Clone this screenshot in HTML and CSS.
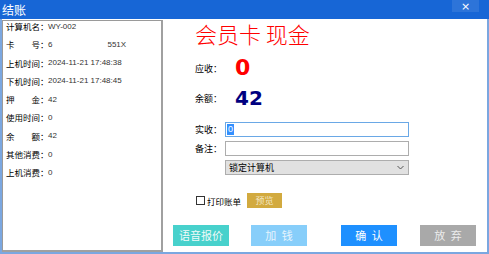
FILE: index.html
```html
<!DOCTYPE html>
<html lang="zh-CN">
<head>
    <meta charset="UTF-8">
    <title>结账</title>
    <link rel="stylesheet" href="styles.css">
</head>
<body>
<div class="window">
    <div class="titlebar">
        <span class="title">结账</span>
        <span class="close">×</span>
    </div>
    <div class="content">
        <div class="info">
            <div class="info-row"><span class="info-label">计算机名：</span><span class="info-value">WY-002</span></div>
            <div class="info-row"><span class="info-label">卡　　号：</span><span class="info-value">6</span><span class="info-value card-tail">551X</span></div>
            <div class="info-row"><span class="info-label">上机时间：</span><span class="info-value">2024-11-21 17:48:38</span></div>
            <div class="info-row"><span class="info-label">下机时间：</span><span class="info-value">2024-11-21 17:48:45</span></div>
            <div class="info-row"><span class="info-label">押　　金：</span><span class="info-value">42</span></div>
            <div class="info-row"><span class="info-label">使用时间：</span><span class="info-value">0</span></div>
            <div class="info-row"><span class="info-label">余　　额：</span><span class="info-value">42</span></div>
            <div class="info-row"><span class="info-label">其他消费：</span><span class="info-value">0</span></div>
            <div class="info-row"><span class="info-label">上机消费：</span><span class="info-value">0</span></div>
        </div>
        <div class="main">
            <div class="fields">
                <div class="pay-type">会员卡 现金</div>
                <div class="amounts">
                    <div class="amount-row">
                        <span class="label">应收：</span>
                        <span class="amount due">0</span>
                    </div>
                    <div class="amount-row">
                        <span class="label">余额：</span>
                        <span class="amount balance">42</span>
                    </div>
                </div>
                <div class="form">
                    <span class="label">实收：</span>
                    <div class="input focused"><span class="selected">0</span></div>
                    <span class="label">备注：</span>
                    <div class="input"></div>
                    <span></span>
                    <div class="select">
                        <span>锁定计算机</span>
                        <svg width="7" height="5" viewBox="0 0 7 5"><polyline points="0.5,1 3.5,4 6.5,1" fill="none" stroke="#555" stroke-width="1"/></svg>
                    </div>
                </div>
                <div class="print-row">
                    <span class="checkbox"></span>
                    <span class="print-label">打印账单</span>
                    <span class="btn-preview">预览</span>
                </div>
            </div>
            <div class="actions">
                <span class="btn btn-voice">语音报价</span>
                <span class="btn btn-add">加 钱</span>
                <span class="btn btn-confirm">确 认</span>
                <span class="btn btn-cancel">放 弃</span>
            </div>
        </div>
    </div>
</div>
</body>
</html>
```

FILE: styles.css
```css
body { margin: 0; font-family: "Noto Sans CJK SC", "Liberation Sans", sans-serif; background: #fff; }
.window { width: 489px; height: 254px; display: flex; flex-direction: column; }

.titlebar {
    height: 19px;
    background: #1766d6;
    color: #fff;
    display: flex;
    align-items: center;
    justify-content: space-between;
}
.title { font-size: 12px; line-height: 19px; margin-left: 2px; }
.close {
    width: 27px;
    height: 12px;
    margin-right: 10px;
    margin-top: -7px;
    background: #2d74d9;
    font-family: "DejaVu Sans", sans-serif;
    font-size: 11px;
    line-height: 13px;
    text-align: center;
}

.content {
    flex: 1;
    display: flex;
    border: 2px solid #7ba7e0;
    border-top: none;
    min-height: 0;
}

.info {
    width: 155px;
    flex: none;
    margin-top: 1px;
    border-top: 1px solid #9a9a9a;
    border-left: 1px solid #9a9a9a;
    border-right: 2px solid #a0a0a0;
    border-bottom: 2px solid #a0a0a0;
    padding-left: 3px;
}
.info-row { display: flex; align-items: center; height: 10px; margin-bottom: 8.3px; white-space: nowrap; }
.info-label { width: 42px; font-size: 8.5px; color: #000; flex: none; }
.info-value { font-family: "Liberation Sans", sans-serif; font-size: 8px; color: #333; }
.card-tail { margin-left: 55px; }

.main { flex: 1; display: flex; flex-direction: column; }
.fields { padding-left: 32px; }

.pay-type {
    margin-top: 3px;
    font-size: 22px;
    font-weight: 300;
    line-height: 22px;
    color: #ff0000;
    white-space: pre;
}

.amounts { margin-top: 9px; }
.amount-row { display: flex; align-items: center; height: 30px; }
.label { font-size: 9px; color: #000; width: 40px; }
.amount { font-family: "DejaVu Sans", sans-serif; font-weight: bold; line-height: 1; }
.due { color: #ff0000; font-size: 22px; }
.balance { color: #000080; font-size: 20px; }

.form {
    margin-top: 9px;
    display: grid;
    grid-template-columns: 30px 184px;
    grid-auto-rows: 15px;
    row-gap: 4px;
    align-items: center;
}
.form .label { width: auto; }
.input {
    height: 15px;
    box-sizing: border-box;
    border: 1px solid #adadad;
    background: #fff;
    display: flex;
    align-items: center;
    padding-left: 1px;
}
.input.focused { border-color: #6aa8e6; }
.selected {
    background: #3390ff;
    color: #fff;
    font-family: "Liberation Sans", sans-serif;
    font-size: 9px;
    line-height: 11px;
    padding: 0 1px;
}
.select {
    height: 15px;
    box-sizing: border-box;
    border: 1px solid #adadad;
    background: #e1e1e1;
    display: flex;
    align-items: center;
    justify-content: space-between;
    padding: 0 4px 0 3px;
    font-size: 9px;
    color: #000;
}

.print-row { margin-top: 18px; display: flex; align-items: center; height: 15px; padding-left: 1px; }
.checkbox { width: 9px; height: 9px; box-sizing: border-box; border: 1px solid #333; background: #fff; }
.print-label { font-size: 8.5px; margin-left: 2px; color: #000; }
.btn-preview {
    margin-left: 6px;
    width: 35px;
    height: 15px;
    background: #d2aa3f;
    color: #f3e6c2;
    font-size: 9px;
    line-height: 15px;
    text-align: center;
}

.actions { margin-top: 17px; padding-left: 10px; display: flex; }
.btn {
    width: 56px;
    height: 21px;
    line-height: 21px;
    text-align: center;
    font-size: 11px;
    white-space: pre;
    word-spacing: 3px;
}
.btn-voice { background: #48d1cc; color: #eefaf9; }
.btn-add { background: #87cefa; color: #e6f4fd; margin-left: 22px; }
.btn-confirm { background: #1e90ff; color: #ffffff; margin-left: 34px; }
.btn-cancel { background: #a9a9a9; color: #ececec; margin-left: 23px; }
```
